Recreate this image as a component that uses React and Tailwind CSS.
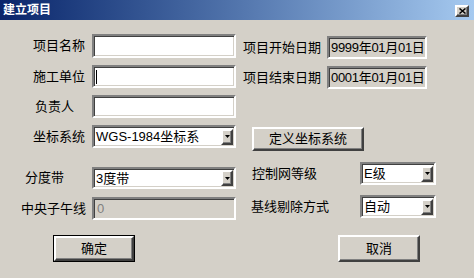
import React from 'react';

const sunken = 'border-2 border-t-[#808080] border-l-[#808080] border-b-white border-r-white shadow-[inset_1px_1px_0_#404040,inset_-1px_-1px_0_#d4d0c8]';
const raised = 'border-2 border-t-white border-l-white border-b-[#404040] border-r-[#404040] shadow-[inset_-1px_-1px_0_#808080,inset_1px_1px_0_#d4d0c8]';

const Arrow = () => (
    <div className={`w-[12px] h-[16px] bg-[#d4d0c8] flex items-center justify-center ${raised} border`}>
        <svg width="5" height="3" viewBox="0 0 5 3">
            <path d="M0 0H5L2.5 3Z" fill="#000" />
        </svg>
    </div>
);

const Select = ({ value, w = 'w-[144px]' }) => (
    <div className={`${w} h-full bg-white flex items-center justify-between pl-[2px] pr-[1px] ${sunken}`}>
        <span className="leading-none">{value}</span>
        <Arrow />
    </div>
);

const Label = ({ text, pl }) => (
    <div className={`w-[92px] flex items-center ${pl}`}>{text}</div>
);

const App = () => {
    return (
        <div
            className="w-[474px] h-[278px] bg-[#d4d0c8] overflow-hidden text-[13px] text-black"
            style={{ fontFamily: '"Liberation Sans", "Noto Sans CJK SC", sans-serif' }}
        >
            {/* title bar */}
            <div className="h-[20px] bg-gradient-to-r from-[#0a246a] to-[#a6caf0] flex items-center justify-between pl-[3px] pr-[5px]">
                <span className="text-white font-bold text-[12px] leading-none">建立项目</span>
                <div className={`w-[14px] h-[12px] mt-[2px] bg-[#d4d0c8] flex items-center justify-center border ${raised}`}>
                    <svg width="7" height="6" viewBox="0 0 7 6">
                        <path d="M0.5 0.5L6.5 5.5M6.5 0.5L0.5 5.5" stroke="#000" strokeWidth="1.5" />
                    </svg>
                </div>
            </div>

            <div className="flex">
                {/* left column */}
                <div className="w-[243px] flex flex-col">
                    <div className="flex h-[24px] mt-[14px]">
                        <Label text="项目名称" pl="pl-[33px]" />
                        <div className={`w-[144px] bg-white ${sunken}`} />
                    </div>
                    <div className="flex h-[23px] mt-[7px]">
                        <Label text="施工单位" pl="pl-[33px]" />
                        <div className={`w-[144px] bg-white flex items-center pl-[2px] ${sunken}`}>
                            <div className="w-px h-[14px] bg-black" />
                        </div>
                    </div>
                    <div className="flex h-[23px] mt-[7px]">
                        <Label text="负责人" pl="pl-[35px]" />
                        <div className={`w-[144px] bg-white ${sunken}`} />
                    </div>
                    <div className="flex h-[23px] mt-[7px]">
                        <Label text="坐标系统" pl="pl-[33px]" />
                        <Select value="WGS-1984坐标系" />
                    </div>
                    <div className="flex h-[22px] mt-[19px]">
                        <Label text="分度带" pl="pl-[25px]" />
                        <Select value="3度带" />
                    </div>
                    <div className="flex h-[23px] mt-[8px]">
                        <Label text="中央子午线" pl="pl-[21px]" />
                        <div className={`w-[144px] bg-[#d4d0c8] flex items-center pl-[3px] text-[#808080] ${sunken}`}>0</div>
                    </div>
                    <div className="flex h-[27px] mt-[15px] pl-[53px]">
                        <div className="w-[82px] h-full border border-black">
                            <div className={`w-full h-full flex items-center justify-center ${raised}`}>确定</div>
                        </div>
                    </div>
                </div>

                {/* right column */}
                <div className="flex-1 flex flex-col">
                    <div className="flex h-[23px] mt-[16px]">
                        <div className="w-[84px] flex items-center">项目开始日期</div>
                        <div className={`w-[100px] flex items-center pl-[2px] tracking-[-0.3px] ${sunken}`}>9999年01月01日</div>
                    </div>
                    <div className="flex h-[23px] mt-[7px]">
                        <div className="w-[84px] flex items-center">项目结束日期</div>
                        <div className={`w-[100px] flex items-center pl-[2px] tracking-[-0.3px] ${sunken}`}>0001年01月01日</div>
                    </div>
                    <div className="flex h-[24px] mt-[38px] pl-[9px]">
                        <div className={`w-[112px] flex items-center justify-center ${raised}`}>定义坐标系统</div>
                    </div>
                    <div className="flex h-[23px] mt-[11px] pl-[9px]">
                        <div className="w-[108px] flex items-center">控制网等级</div>
                        <Select value="E级" w="w-[76px]" />
                    </div>
                    <div className="flex h-[23px] mt-[10px] pl-[8px]">
                        <div className="w-[109px] flex items-center">基线剔除方式</div>
                        <Select value="自动" w="w-[76px]" />
                    </div>
                    <div className="flex h-[27px] mt-[17px] pl-[95px]">
                        <div className={`w-[82px] flex items-center justify-center ${raised}`}>取消</div>
                    </div>
                </div>
            </div>
        </div>
    );
};

export default App;
